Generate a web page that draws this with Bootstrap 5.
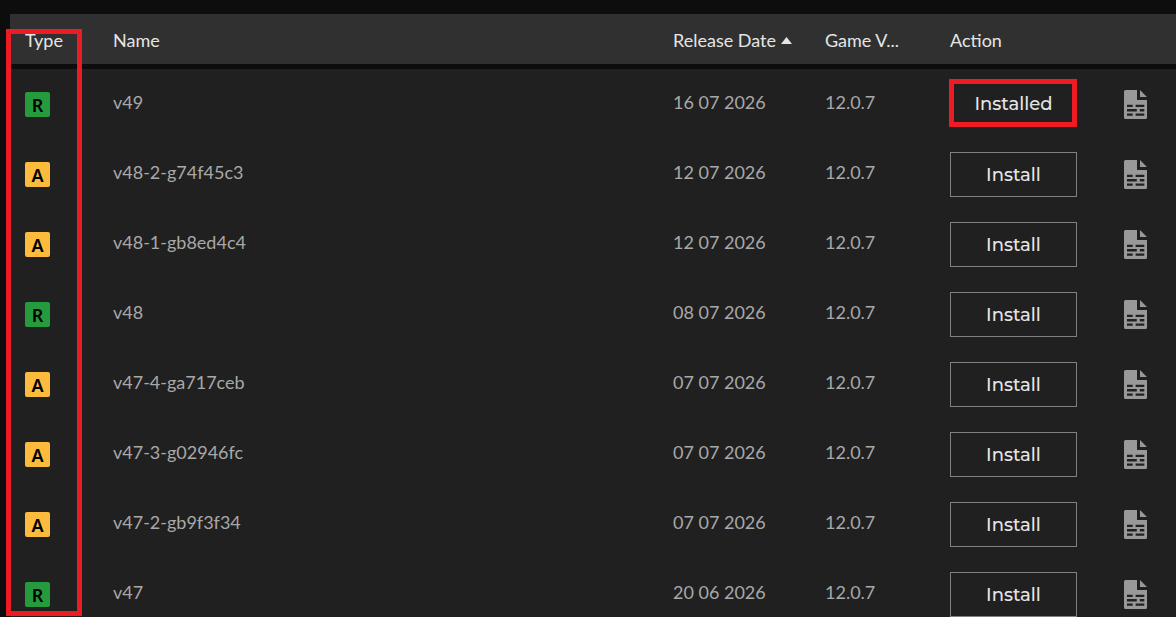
<!DOCTYPE html>
<html lang="en" data-bs-theme="dark">
<head>
<meta charset="utf-8">
<meta name="viewport" content="width=device-width, initial-scale=1">
<title>Releases</title>
<link href="https://cdn.jsdelivr.net/npm/bootstrap@5.3.0/dist/css/bootstrap.min.css" rel="stylesheet">
<style>
  body { background: #0d0d0d; font-family: Lato, sans-serif; font-size: 18px; line-height: 24px; }
  .release-panel { margin: 14px 0 0 10px; }
  .release-table { table-layout: fixed; border-collapse: separate; border-spacing: 0; --bs-table-bg: transparent; }
  .release-table > * > tr > * { padding: 0 15px; border: 0; vertical-align: middle; }
  .release-table thead th { height: 55px; padding-top: 2px; background: #303030; color: #e5e5e5; font-weight: 400; border-bottom: 5px solid #0d0d0d; }
  .release-table tbody td { height: 70px; background: #202020; color: #a8a8a8; }
  .release-table tbody td.text-cell { padding-bottom: 4px; }
  .col-type { width: 88px; }
  .col-date { width: 152px; }
  .col-game { width: 125px; }
  .col-action { width: 174px; }
  .col-notes { width: 67px; }
  .type-tag { display: block; width: 25px; height: 25px; border-radius: 2px; color: #000; font: 600 18px/27px "Noto Sans", sans-serif; text-align: center; }
  .type-r { background: #259b3e; }
  .type-a { background: #fbbc3d; }
  .btn-install { --bs-btn-color: #e5e5e5; --bs-btn-border-color: #808080; --bs-btn-hover-color: #fff; --bs-btn-hover-border-color: #fff; width: 127px; height: 45px; padding: 2px 0 0; border-radius: 0; font: 500 18px/24px Montserrat, Inter, sans-serif; }
  .btn-installed { padding-top: 0; }
  .btn-notes { color: #999; width: 23px; height: 29px; }
  .highlight { position: absolute; border: 5px solid #ed1c24; pointer-events: none; }
  .highlight-type { left: -4px; top: 15px; width: 76px; bottom: 13px; }
  .highlight-action { inset: -3px 0 0 -1px; }
</style>
</head>
<body class="vh-100 overflow-hidden">
<svg class="d-none" aria-hidden="true">
  <symbol id="notes" viewBox="0 0 23 29">
    <path fill="currentColor" fill-rule="evenodd" d="M1.500 0H13V10H23V27.500Q23 29 21.500 29H1.500Q0 29 0 27.500V1.500Q0 0 1.500 0ZM3 14.700V17H8.700V14.700ZM11.600 14.700V17H20.300V14.700ZM3 19V21.400H12.800V19ZM15.800 19V21.400H20.300V19ZM3 23.500V25.700H8.700V23.500ZM11.600 23.500V25.700H20.300V23.500ZM16 0L23 7H16Z"/>
  </symbol>
</svg>
<main class="release-panel position-relative">
  <table class="table release-table w-100 mb-0">
    <colgroup><col class="col-type"><col><col class="col-date"><col class="col-game"><col class="col-action"><col class="col-notes"></colgroup>
    <thead>
      <tr>
        <th scope="col">Type</th>
        <th scope="col">Name</th>
        <th scope="col" class="text-nowrap" aria-sort="ascending">Release Date <svg class="align-baseline" width="11" height="10" viewBox="0 0 11 10" aria-hidden="true"><path fill="#e5e5e5" d="M5.500 0L11 7H0Z"/></svg></th>
        <th scope="col" class="text-truncate">Game V...</th>
        <th scope="col">Action</th>
        <th scope="col"></th>
      </tr>
    </thead>
    <tbody id="releases"></tbody>
  </table>
  <div class="highlight highlight-type"></div>
</main>
<script src="https://cdn.jsdelivr.net/npm/bootstrap@5.3.0/dist/js/bootstrap.bundle.min.js"></script>
<script>
  const releases = [
    ['R', 'v49', '16 07 2026'],
    ['A', 'v48-2-g74f45c3', '12 07 2026'],
    ['A', 'v48-1-gb8ed4c4', '12 07 2026'],
    ['R', 'v48', '08 07 2026'],
    ['A', 'v47-4-ga717ceb', '07 07 2026'],
    ['A', 'v47-3-g02946fc', '07 07 2026'],
    ['A', 'v47-2-gb9f3f34', '07 07 2026'],
    ['R', 'v47', '20 06 2026']
  ];
  document.getElementById('releases').innerHTML = releases.map(([type, name, date], i) => `
    <tr>
      <td><span class="type-tag type-${type.toLowerCase()}">${type}</span></td>
      <td class="text-cell">${name}</td>
      <td class="text-cell text-nowrap">${date}</td>
      <td class="text-cell">12.0.7</td>
      <td><div class="position-relative d-inline-flex align-middle"><button type="button" class="btn btn-install${i ? '' : ' btn-installed'}">${i ? 'Install' : 'Installed'}</button>${i ? '' : '<div class="highlight highlight-action"></div>'}</div></td>
      <td><button type="button" class="btn btn-notes border-0 p-0 d-block" aria-label="Release notes for ${name}"><svg class="d-block" width="23" height="29"><use href="#notes"/></svg></button></td>
    </tr>`).join('');
</script>
</body>
</html>
